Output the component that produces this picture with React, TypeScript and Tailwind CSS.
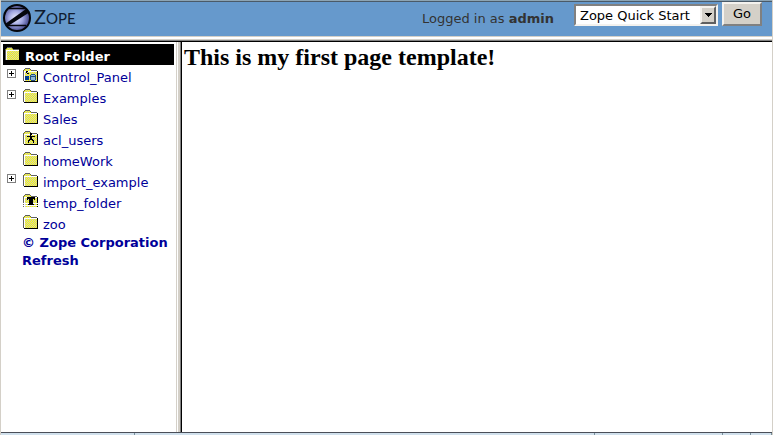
import React from 'react';

const ITEMS = [
  { name: 'Control_Panel', kind: 'control', expandable: true },
  { name: 'Examples', kind: 'folder', expandable: true },
  { name: 'Sales', kind: 'folder', expandable: false },
  { name: 'acl_users', kind: 'users', expandable: false },
  { name: 'homeWork', kind: 'folder', expandable: false },
  { name: 'import_example', kind: 'folder', expandable: true },
  { name: 'temp_folder', kind: 'temp', expandable: false },
  { name: 'zoo', kind: 'folder', expandable: false },
];

const FolderIcon: React.FC<{ kind: string }> = ({ kind }) => (
  <svg width="16" height="16" viewBox="0 0 16 16" shapeRendering="crispEdges" aria-hidden="true" className="shrink-0">
    <defs>
      <pattern id="dither" width="2" height="2" patternUnits="userSpaceOnUse">
        <rect width="2" height="2" fill="#c8c8c8" />
        <rect width="1" height="1" fill="#ffff00" />
        <rect x="1" y="1" width="1" height="1" fill="#ffff00" />
      </pattern>
    </defs>
    <path d="M1 3h1V2h5v1h1v1h6v11H1z" fill="url(#dither)" />
    <path d="M0 3h1V2h1V1h5v1h1v1h6v1H8V3H7V2H2v1H1v11H0z" fill="#606060" />
    <path d="M1 4h13v1H2v9H1z" fill="#ffffff" />
    <path d="M1 14h13V4h1v11H1z" fill="#000000" />
    {kind === 'control' && (
      <g>
        <path d="M2 9h4v4H2z" fill="#003c8c" />
        <path d="M7 8h1V7h4v1h1v5h-1v1H8v-1H7z" fill="#205080" />
        <path d="M8 8h4v1H8zM8 10h4v3H8z" fill="#90b8d8" />
        <path d="M3 4h2v1H4v1h2v1H4V6H3z" fill="#000000" />
      </g>
    )}
    {kind === 'users' && (
      <path d="M7 3h2v2h-1v1h4v1H9v2h1v1h1v3h-1v-2H9v-1H7v1H6v2H5v-3h1V9h1V7H4V6h3z" fill="#000000" />
    )}
    {kind === 'temp' && (
      <g>
        <path d="M0 10h16v1H0zM0 12h16v1H0zM0 14h16v2H0z" fill="#ffffff" />
        <path d="M4 4h8v3h-1V6h-1v5h1v1H5v-1h1V6H5v1H4z" fill="#000000" />
      </g>
    )}
  </svg>
);

const ZopeLogo: React.FC = () => (
  <svg width="30" height="30" viewBox="0 0 30 30" aria-hidden="true" className="shrink-0">
    <defs>
      <radialGradient id="ball" cx="45%" cy="50%" r="55%">
        <stop offset="0" stopColor="#eceeff" />
        <stop offset="0.5" stopColor="#a0a6e0" />
        <stop offset="1" stopColor="#383c80" />
      </radialGradient>
    </defs>
    <circle cx="15" cy="15" r="13" fill="url(#ball)" stroke="#04060c" strokeWidth="2" />
    <path d="M7 5.500h16M5 22.500h19" fill="none" stroke="#04060c" strokeWidth="1.500" />
    <path d="M24 6L3 21l3 2L28 9z" fill="#04060c" />
  </svg>
);

const Header: React.FC = () => (
  <header className="flex h-9 shrink-0 items-start justify-between border-t border-[#8ca4b4] bg-[#6699cc]">
    <a href="#home" className="flex flex-1 items-start gap-0.5 border-t border-[#4a5a68] pt-px pl-px font-['Lato',sans-serif] text-[#101c30]">
      <ZopeLogo />
      <span className="pt-px text-xl leading-6">Z<span className="text-[15px] leading-6">OPE</span></span>
    </a>
    <form className="flex shrink-0 items-start border-t border-[#4a5a68] pr-2.5 text-[13px]">
      <span className="pt-[7px] pr-5 leading-5 text-[#333333]">Logged in as <strong>admin</strong></span>
      <span className="relative mt-0.5 flex">
        <select
          aria-label="Zope action"
          className="h-[22px] w-36 appearance-none border-2 border-t-[#808080] border-r-[#f4f2ee] border-b-[#f4f2ee] border-l-[#808080] bg-white pl-1 text-[13px] text-black"
        >
          <option>Zope Quick Start</option>
        </select>
        <span className="pointer-events-none absolute top-0.5 right-0.5 flex h-[18px] w-4 items-center justify-center border-2 border-t-[#f4f2ee] border-r-[#606060] border-b-[#606060] border-l-[#f4f2ee] bg-[#d4d0c8]">
          <svg width="7" height="4" viewBox="0 0 7 4" shapeRendering="crispEdges" aria-hidden="true">
            <path d="M0 0h7v1H6v1H5v1H4v1H3V3H2V2H1V1H0z" />
          </svg>
        </span>
      </span>
      <button
        type="button"
        className="ml-1 h-6 w-10 border-2 border-t-[#f4f2ee] border-r-[#808080] border-b-[#808080] border-l-[#f4f2ee] bg-[#d4d0c8] text-[13px] leading-5 text-black"
      >
        Go
      </button>
    </form>
  </header>
);

const Tree: React.FC = () => (
  <nav className="w-[175px] shrink-0 px-0.5 pt-0.5 text-[13px] leading-5 text-[#000099]">
    <a href="#root-folder" className="flex h-[21px] items-start gap-1 bg-black pt-0.5 pl-0.5 font-bold text-white">
      <FolderIcon kind="folder" />
      <span className="pt-px">Root Folder</span>
    </a>
    <ul>
      {ITEMS.map((item) => (
        <li key={item.name} className="flex h-[21px] items-start pt-0.5 pl-1">
          <span className="flex w-4 shrink-0 pt-0.5">
            {item.expandable && (
              <button type="button" aria-label={`Expand ${item.name}`} className="h-[9px] w-[9px]">
                <svg width="9" height="9" viewBox="0 0 9 9" shapeRendering="crispEdges" aria-hidden="true">
                  <path d="M0 0h9v9H0z" fill="#808080" />
                  <path d="M1 1h7v7H1z" fill="#ffffff" />
                  <path d="M4 2h1v2h2v1H5v2H4V5H2V4h2z" fill="#000000" />
                </svg>
              </button>
            )}
          </span>
          <a href={`#${item.name}`} className="flex items-start gap-1">
            <FolderIcon kind={item.kind} />
            <span className="pt-px">{item.name}</span>
          </a>
        </li>
      ))}
    </ul>
    <div className="flex flex-col pt-px pl-[19px] leading-[18px] font-bold">
      <a href="#copyright">© Zope Corporation</a>
      <a href="#refresh">Refresh</a>
    </div>
  </nav>
);

const App: React.FC = () => (
  <div className="flex h-screen flex-col overflow-hidden border-x border-[#d4d0c8] bg-white font-['DejaVu_Sans',sans-serif]">
    <Header />
    <div className="h-1.5 shrink-0 border-t border-b border-t-[#d4d0c8] border-b-black bg-[#d4d0c8]">
      <div className="h-1 border-t-2 border-b border-t-white border-b-[#808080]" />
    </div>
    <div className="flex min-h-0 flex-1">
      <Tree />
      <div className="flex w-1.5 shrink-0 border-x border-l-[#d4d0c8] border-r-black bg-[#d4d0c8]">
        <div className="w-full border-x border-l-white border-r-[#808080]" />
      </div>
      <main className="flex-1 px-0.5 pt-px">
        <h1 className="font-['Liberation_Serif',serif] text-2xl leading-7 font-bold text-black">
          This is my first page template!
        </h1>
      </main>
    </div>
    <footer className="flex h-[3px] shrink-0 border-t border-[#4a4e58] bg-[#d0e0ec]">
      <div className="w-[134px] border-r border-[#78909c]" />
      <div className="flex-1 border-r border-[#78909c]" />
      <div className="w-32 border-r border-[#78909c]" />
      <div className="w-7 border-r border-[#78909c]" />
      <div className="w-[21px] border-r border-[#78909c]" />
    </footer>
  </div>
);

export default App;
